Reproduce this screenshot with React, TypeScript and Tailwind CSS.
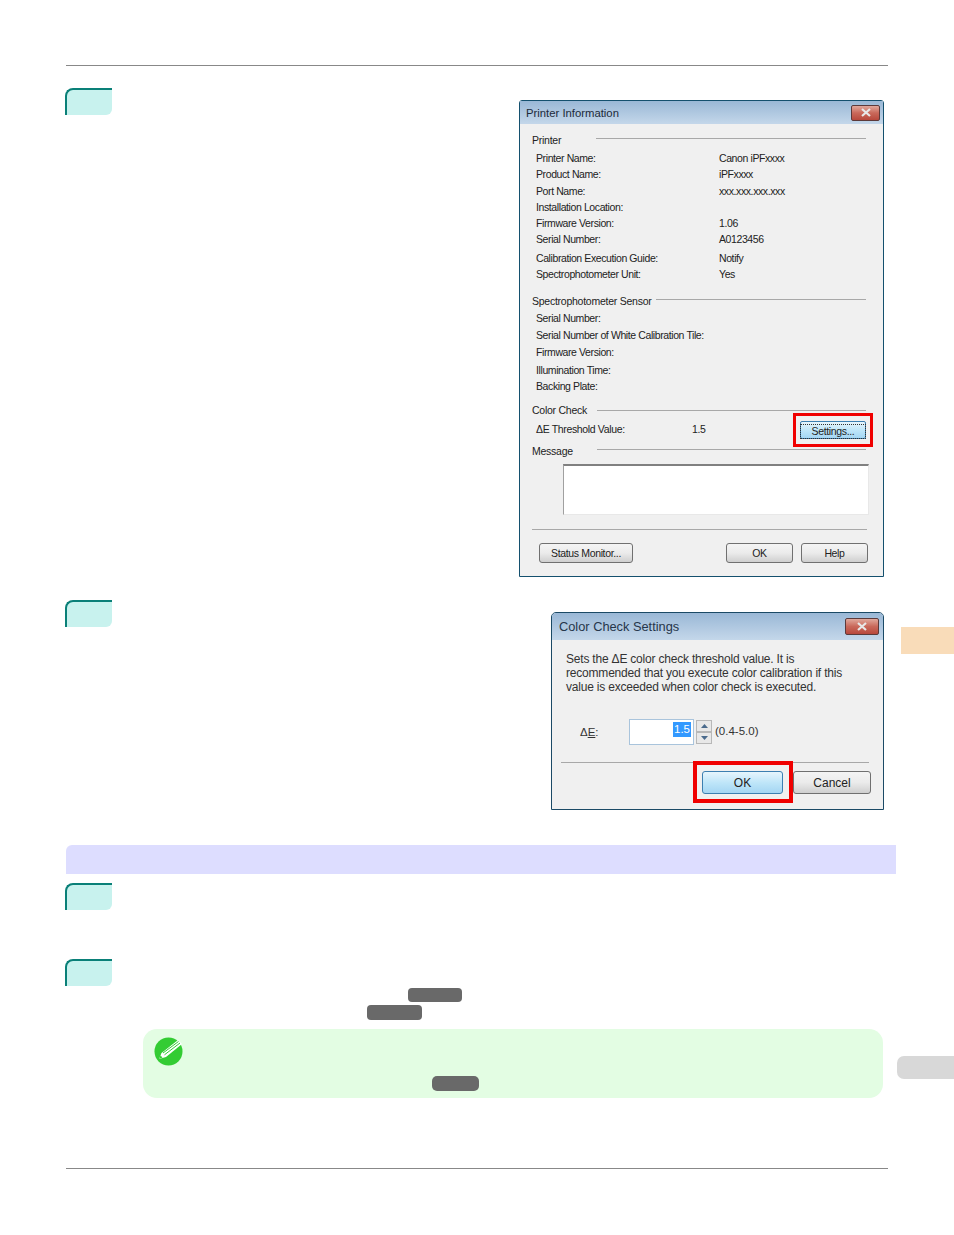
import React from 'react';

const StepBadge = () => (
  <div className="w-[47px] h-[27px] -ml-px shrink-0 bg-[#c8f2ee] border-t-2 border-l-2 border-[#0a8078] rounded-tl-[8px] rounded-br-[6px]" />
);

const GreyPill = ({ className }: { className: string }) => (
  <div className={`bg-[#696969] rounded-[4px] ${className}`} />
);

const CloseButton = ({ className }: { className: string }) => (
  <div className={`flex items-center justify-center rounded-[2px] border border-[#5c3a3a] bg-gradient-to-b from-[#e0a89c] via-[#c9685a] to-[#b8483c] ${className}`}>
    <svg width="12" height="9" viewBox="0 0 12 9">
      <path d="M2 1 L10 8 M10 1 L2 8" stroke="#e8e8e8" strokeWidth="2.2" />
    </svg>
  </div>
);

const WinButton = ({ className, children }: { className: string; children: React.ReactNode }) => (
  <div className={`flex items-center justify-center rounded-[3px] border border-[#707070] bg-gradient-to-b from-[#f4f4f4] via-[#ebebeb] to-[#cfcfcf] text-[#222] ${className}`}>
    {children}
  </div>
);

const SectionTitle = ({ title, titleClass, className }: { title: string; titleClass: string; className: string }) => (
  <div className={`flex items-center w-[334px] text-[10.5px] tracking-[-0.25px] text-[#222] ${className}`}>
    <span className={`shrink-0 whitespace-nowrap ${titleClass}`}>{title}</span>
    <div className="flex-1 h-px bg-[#a8a8a8] -mt-[3px]" />
  </div>
);

const InfoRow = ({ label, value, className }: { label: string; value?: string; className: string }) => (
  <div className={`flex items-center pl-1 text-[10.5px] tracking-[-0.4px] text-[#222] ${className}`}>
    <span className="w-[183px] shrink-0 whitespace-nowrap">{label}</span>
    {value && <span>{value}</span>}
  </div>
);

const PrinterInfoDialog = () => (
  <div className="w-[365px] h-[477px] mt-3 border border-[#14506e] rounded-t-[3px] bg-[#f0f0f0] flex flex-col">
    <div className="h-[23px] shrink-0 flex items-center justify-between pl-[6px] pr-[3px] bg-gradient-to-b from-[#9ab8d6] to-[#c4d7ea] text-[11.3px] text-[#1c2a3a]">
      <span className="mt-[2px]">Printer Information</span>
      <CloseButton className="w-[29px] h-[16px]" />
    </div>
    <div className="flex-1 flex flex-col pl-3 pr-4">
      <SectionTitle title="Printer" titleClass="w-[64px] mt-[2px]" className="h-[14px] mt-[9px]" />
      <InfoRow label="Printer Name:" value="Canon iPFxxxx" className="h-[16px] mt-[4px]" />
      <InfoRow label="Product Name:" value="iPFxxxx" className="h-[16px]" />
      <InfoRow label="Port Name:" value="xxx.xxx.xxx.xxx" className="h-[17px]" />
      <InfoRow label="Installation Location:" className="h-[16px]" />
      <InfoRow label="Firmware Version:" value="1.06" className="h-[16px]" />
      <InfoRow label="Serial Number:" value="A0123456" className="h-[16px]" />
      <InfoRow label="Calibration Execution Guide:" value="Notify" className="h-[17px] mt-[2px]" />
      <InfoRow label="Spectrophotometer Unit:" value="Yes" className="h-[16px]" />

      <SectionTitle title="Spectrophotometer Sensor" titleClass="w-[124px] mt-[2px]" className="h-[14px] mt-[11px]" />
      <InfoRow label="Serial Number:" className="h-[17px] mt-[2px]" />
      <InfoRow label="Serial Number of White Calibration Tile:" className="h-[17px]" />
      <InfoRow label="Firmware Version:" className="h-[17px]" />
      <InfoRow label="Illumination Time:" className="h-[18px] pt-[2px]" />
      <InfoRow label="Backing Plate:" className="h-[16px]" />

      <SectionTitle title="Color Check" titleClass="w-[65px] mb-[2px]" className="h-[14px] mt-[10px]" />
      <div className="flex items-center h-[34px] -mt-[6px] pl-1 text-[10.5px] tracking-[-0.35px] text-[#222]">
        <span className="w-[156px] shrink-0 whitespace-nowrap">ΔE Threshold Value:</span>
        <span className="w-[101px] shrink-0">1.5</span>
        <div className="w-[80px] h-[34px] shrink-0 border-[3px] border-[#f00000] p-[5px]">
          <div className="h-[18px] -mx-px pt-[2px] flex items-center justify-center rounded-[2px] border border-[#3c7fb1] bg-gradient-to-b from-[#e6f5fd] via-[#bfe6f9] to-[#a4d6f3]">
            <span className="outline-1 outline-dotted outline-[#333] px-[11px] leading-[13px]">Settings...</span>
          </div>
        </div>
      </div>

      <SectionTitle title="Message" titleClass="w-[65px] mt-[2px]" className="h-[14px] -mt-[3px]" />
      <div className="ml-[31px] w-[306px] h-[51px] mt-[6px] bg-white border-t-2 border-l border-r border-b border-[#e8e8e8] border-t-[#808080] border-l-[#a0a0a0]" />
      <div className="h-px w-[335px] mt-[14px] bg-[#a8a8a8]" />
      <div className="flex items-center mt-[13px] pl-[7px] text-[10.5px] tracking-[-0.35px] w-[336px]">
        <WinButton className="w-[94px] h-[20px] pt-[2px]">Status Monitor...</WinButton>
        <WinButton className="w-[67px] h-[20px] pt-[2px] ml-[93px]">OK</WinButton>
        <WinButton className="w-[67px] h-[20px] pt-[2px] ml-2">Help</WinButton>
      </div>
    </div>
  </div>
);

const ColorCheckDialog = () => (
  <div className="w-[333px] h-[198px] mt-3 border border-[#1b4a66] rounded-t-[5px] bg-[#f0f0f0] flex flex-col">
    <div className="h-[27px] shrink-0 flex items-center justify-between pl-[7px] pr-[4px] rounded-t-[4px] bg-gradient-to-b from-[#9ab8d6] to-[#c4d7ea] text-[12.8px] text-[#26364a]">
      <span>Color Check Settings</span>
      <CloseButton className="w-[34px] h-[17px]" />
    </div>
    <div className="flex-1 flex flex-col pl-[14px] text-[#333]">
      <p className="mt-[12px] w-[300px] text-[12px] leading-[14px] tracking-[-0.2px]">
        Sets the ΔE color check threshold value. It is
        <br />
        recommended that you execute color calibration if this
        <br />
        value is exceeded when color check is executed.
      </p>
      <div className="flex items-center h-[26px] mt-[25px] pl-[14px] text-[11.5px]">
        <span className="w-[49px] mt-px">Δ<u>E</u>:</span>
        <div className="w-[65px] h-[26px] flex items-start justify-end pt-[2px] pr-[2px] bg-white border border-[#a9c4dc]">
          <span className="bg-[#3399ff] text-white px-px leading-[15px]">1.5</span>
        </div>
        <div className="flex flex-col ml-[2px] w-[16px]">
          <div className="h-[12px] flex items-center justify-center border border-[#b8b8b8] bg-[#e8e8e8]">
            <svg width="7" height="4" viewBox="0 0 7 4"><path d="M3.5 0 L7 4 H0 Z" fill="#4a6a8c" /></svg>
          </div>
          <div className="h-[12px] flex items-center justify-center border border-[#b8b8b8] bg-[#e8e8e8]">
            <svg width="7" height="4" viewBox="0 0 7 4"><path d="M0 0 H7 L3.5 4 Z" fill="#4a6a8c" /></svg>
          </div>
        </div>
        <span className="ml-[3px]">(0.4-5.0)</span>
      </div>
      <div className="h-px w-[308px] ml-[-5px] mt-[17px] bg-[#a8a8a8]" />
      <div className="flex items-start -mt-[2px] pl-[127px]">
        <div className="w-[100px] h-[42px] shrink-0 border-4 border-[#f00000] pt-[6px] pl-[5px]">
          <div className="w-[81px] h-[23px] flex items-center justify-center rounded-[3px] border border-[#3c7fb1] bg-gradient-to-b from-[#e6f5fd] via-[#bfe6f9] to-[#a4d6f3] text-[12px] text-[#222]">
            OK
          </div>
        </div>
        <WinButton className="w-[78px] h-[23px] mt-[10px] text-[12px]">Cancel</WinButton>
      </div>
    </div>
  </div>
);

const PencilIcon = () => (
  <svg width="31" height="30" viewBox="0 0 31 30" className="shrink-0">
    <circle cx="14.5" cy="15.5" r="14" fill="#33cc33" />
    <path d="M5 23 L7.5 17 L24 4 L28 8 L12 21 Z" fill="#ffffff" />
    <path d="M9 17 L24.5 5.5 M10.5 18.8 L26 7" stroke="#33cc33" strokeWidth="1" />
    <path d="M5 23 L6.5 19.5 L8.5 21.5 Z" fill="#33cc33" />
  </svg>
);

export default function App() {
  return (
    <div className="relative w-[954px] h-[1235px] overflow-hidden bg-white font-['Liberation_Sans',Arial,sans-serif]">
      <div className="absolute right-0 top-[627px] w-[53px] h-[27px] bg-[#f9dcb9]" />
      <div className="absolute right-0 top-[1056px] w-[57px] h-[23px] bg-[#d8d8d8] rounded-l-[7px]" />

      <main className="ml-[66px] w-[822px] pt-[65px] flex flex-col">
        <div className="h-px bg-[#888888]" />

        <section className="flex justify-between items-start mt-[22px] w-[818px]">
          <StepBadge />
          <PrinterInfoDialog />
        </section>

        <section className="flex justify-between items-start mt-[23px] w-[818px]">
          <StepBadge />
          <ColorCheckDialog />
        </section>

        <div className="w-[830px] h-[29px] mt-[35px] bg-[#ddddff] rounded-tl-[6px]" />

        <div className="mt-[9px]"><StepBadge /></div>
        <div className="mt-[49px]"><StepBadge /></div>

        <GreyPill className="w-[54px] h-[14px] mt-[2px] ml-[342px]" />
        <GreyPill className="w-[55px] h-[15px] mt-[3px] ml-[301px]" />

        <div className="w-[740px] h-[69px] mt-[9px] ml-[77px] bg-[#e3fde3] rounded-[14px] pl-[11px] pt-[7px]">
          <PencilIcon />
          <GreyPill className="w-[47px] h-[15px] mt-[10px] ml-[278px] rounded-[5px]" />
        </div>

        <div className="h-px mt-[70px] bg-[#888888]" />
      </main>
    </div>
  );
}
